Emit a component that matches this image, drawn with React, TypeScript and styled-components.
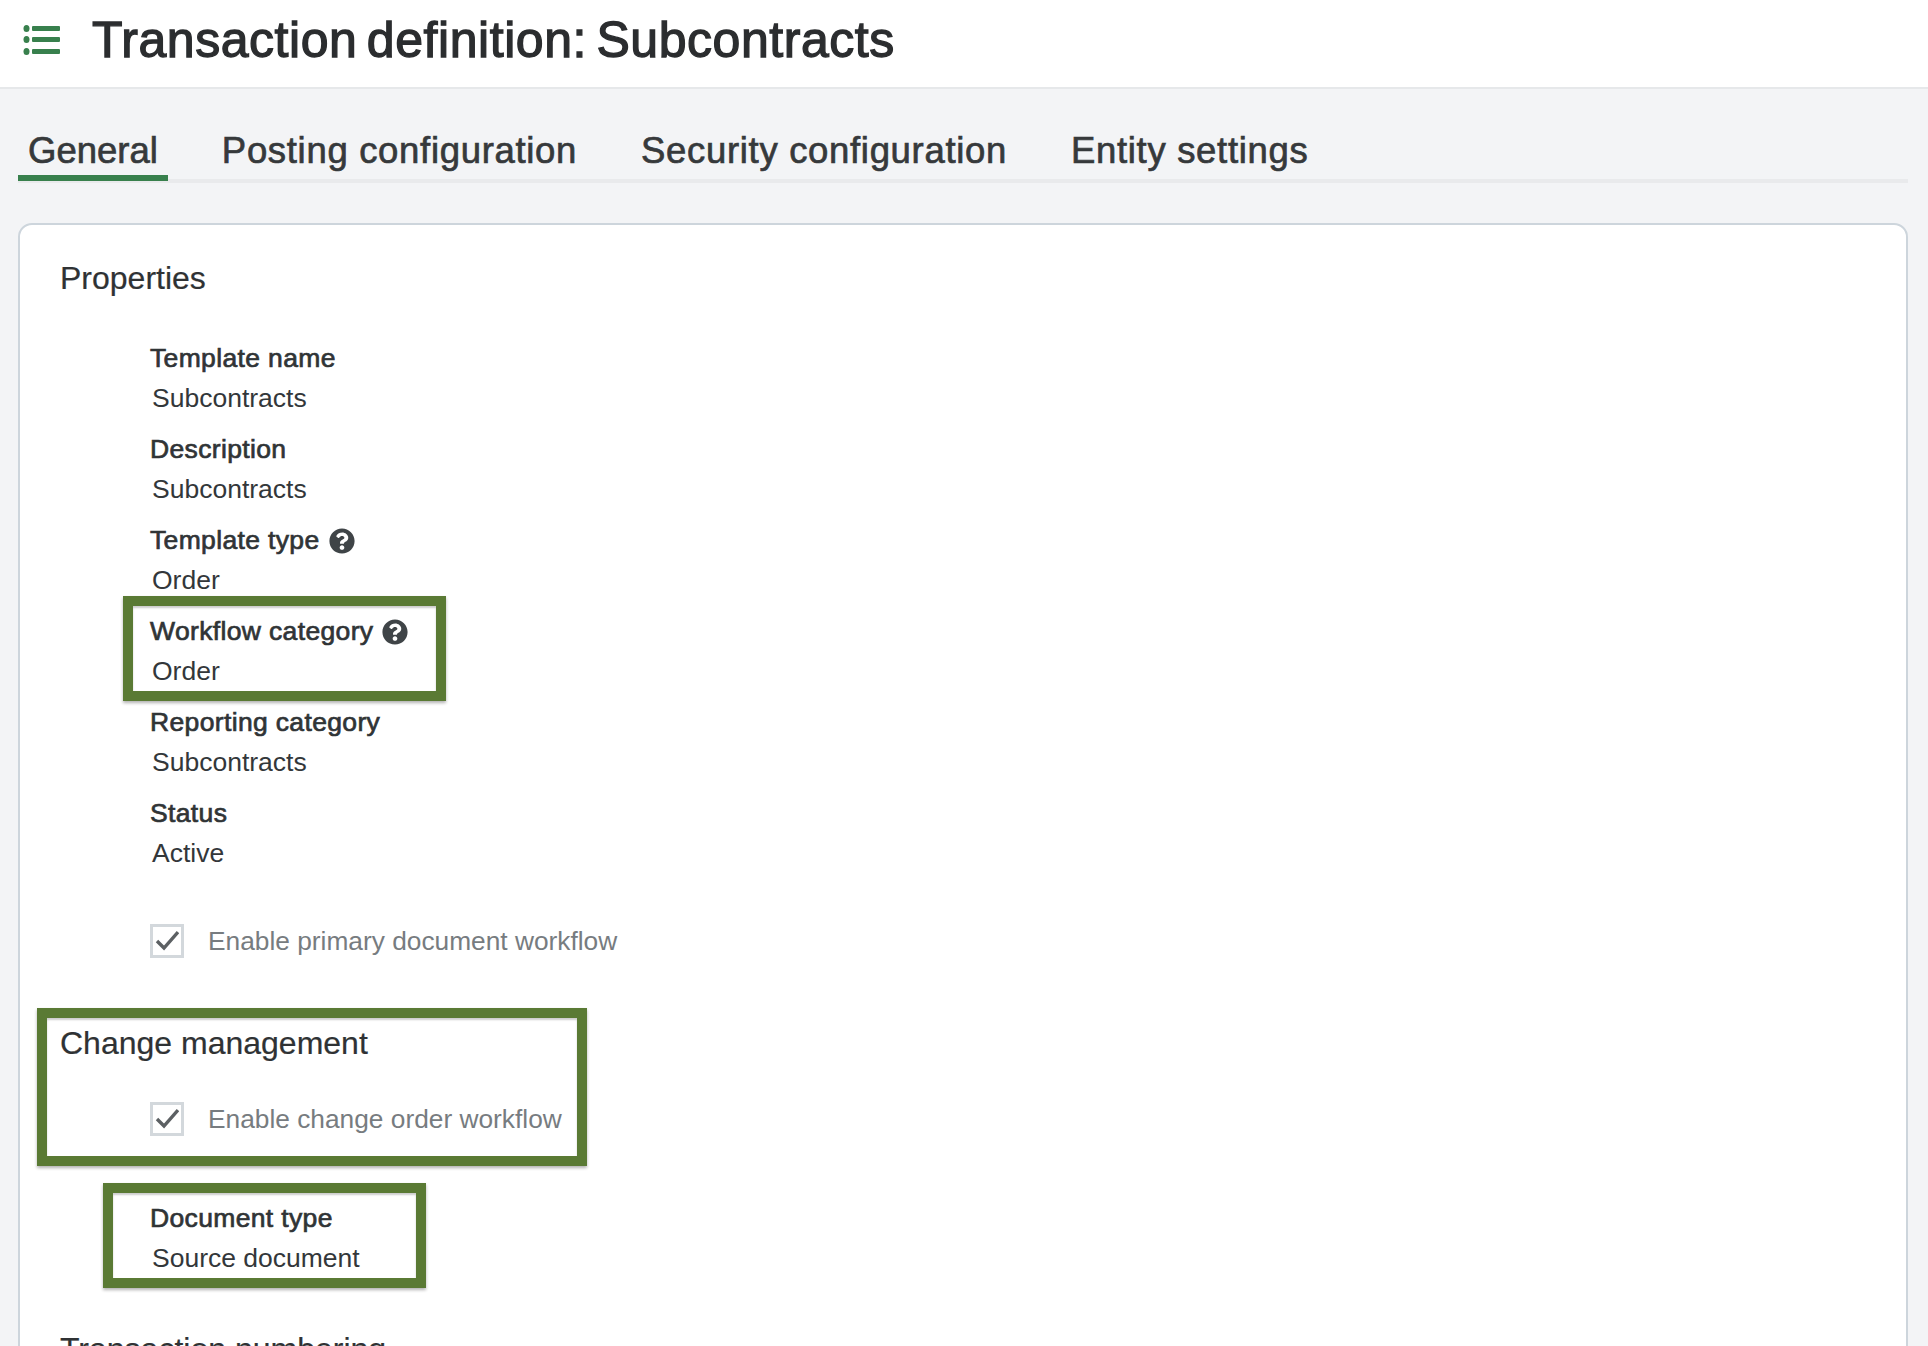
import React from 'react';
import styled, {createGlobalStyle} from 'styled-components';
import {FaQuestionCircle} from 'react-icons/fa';

const GlobalStyle = createGlobalStyle`
  html, body {
    margin: 0;
    padding: 0;
    height: 1346px;
    overflow: hidden;
    background: #f3f4f6;
    font-family: "Liberation Sans", Arial, sans-serif;
  }
  * {
    box-sizing: border-box;
  }
`;

const Page = styled.div`
  height: 1346px;
  overflow: hidden;
  background: #f3f4f6;
`;

const Header = styled.header`
  height: 89px;
  background: #fff;
  border-bottom: 2px solid #e6e8ea;
  display: flex;
  align-items: center;
  padding: 0 0 7px 23px;
  gap: 31px;
`;

const Title = styled.h1`
  margin: 0;
  font-size: 50px;
  line-height: 60px;
  font-weight: 400;
  letter-spacing: 0.55px;
  word-spacing: -5px;
  color: #2b2d2f;
  -webkit-text-stroke: 1.3px #2b2d2f;
`;

const TabBar = styled.nav`
  display: flex;
  gap: 44px;
  height: 94px;
  margin: 0 20px 40px 18px;
  align-items: flex-end;
  border-bottom: 4px solid #e9eaec;
`;

const Tab = styled.div<{$active?: boolean}>`
  height: 56px;
  margin-bottom: -2px;
  padding: 4px 10px 0;
  font-size: 36.5px;
  line-height: 44px;
  letter-spacing: ${p => (p.$active ? 0 : 0.68)}px;
  color: #36393b;
  -webkit-text-stroke: 0.7px #36393b;
  border-bottom: 6px solid ${p => (p.$active ? '#38804d' : 'transparent')};
`;

const Card = styled.section`
  margin: 0 20px 0 18px;
  padding: 33px 40px 0;
  background: #fff;
  border: 2px solid #cdd5dc;
  border-radius: 14px;
  height: 1200px;
`;

const Heading = styled.h2<{$gap?: number}>`
  margin: ${p => p.$gap ?? 0}px 0 0;
  font-size: 32px;
  line-height: 40px;
  font-weight: 400;
  color: #2f3234;
  -webkit-text-stroke: 0.2px #2f3234;
`;

const Fields = styled.div`
  margin: 42px 0 0 90px;
  display: flex;
  flex-direction: column;
  gap: 13px;
`;

const Field = styled.div`
  position: relative;
`;

const Label = styled.div`
  display: flex;
  align-items: center;
  gap: 9px;
  margin-bottom: 2px;
  font-size: 26.5px;
  line-height: 37px;
  letter-spacing: 0.35px;
  color: #303436;
  -webkit-text-stroke: 0.7px #303436;
  svg {
    color: #3f4447;
  }
`;

const Value = styled.div`
  padding-left: 2px;
  font-size: 26.5px;
  line-height: 39px;
  color: #33373a;
`;

const CheckRow = styled.label<{$gap: number}>`
  margin: ${p => p.$gap}px 0 0 90px;
  display: flex;
  align-items: center;
  gap: 24px;
  height: 34px;
  font-size: 26.3px;
  color: #777c80;
`;

const CheckBox = styled.span`
  width: 34px;
  height: 34px;
  flex: none;
  display: flex;
  align-items: center;
  justify-content: center;
  background: #fff;
  border: 3px solid #d3d8dc;
`;

const ChangeSection = styled.div`
  position: relative;
  margin-top: 65px;
`;

const SingleField = styled(Field)`
  margin: 64px 0 0 90px;
`;

// green annotation frames drawn over the screenshot
const Highlight = styled.div<{$top: number; $left: number; $width: number; $height: number}>`
  position: absolute;
  top: ${p => p.$top}px;
  left: ${p => p.$left}px;
  width: ${p => p.$width}px;
  height: ${p => p.$height}px;
  border: 10px solid #5a7a34;
  box-shadow: 0 2px 3px rgba(0, 0, 0, 0.3), inset 0 2px 2px rgba(0, 0, 0, 0.2);
  pointer-events: none;
`;

const ListIcon = () => (
  <svg width="38" height="32" viewBox="0 0 38 32" fill="#38804d">
    <rect x="9" y="2" width="28" height="5" rx="1" />
    <rect x="9" y="13" width="28" height="5" rx="1" />
    <rect x="9" y="25" width="28" height="5" rx="1" />
    <ellipse cx="3.5" cy="4.5" rx="3" ry="3.5" />
    <ellipse cx="3.5" cy="15.5" rx="3" ry="3.5" />
    <ellipse cx="3.5" cy="27.5" rx="3" ry="3.5" />
  </svg>
);

const Tick = () => (
  <svg width="24" height="24" viewBox="0 0 24 24" fill="none" stroke="#5c6063" strokeWidth="3.4">
    <path d="M2 12l7 7L23 3" />
  </svg>
);

const Help = () => <FaQuestionCircle size={26} />;

const App: React.FC = () => (
  <Page>
    <GlobalStyle />
    <Header>
      <ListIcon />
      <Title>Transaction definition: Subcontracts</Title>
    </Header>
    <TabBar>
      <Tab $active>General</Tab>
      <Tab>Posting configuration</Tab>
      <Tab>Security configuration</Tab>
      <Tab>Entity settings</Tab>
    </TabBar>
    <Card>
      <Heading>Properties</Heading>
      <Fields>
        <Field>
          <Label>Template name</Label>
          <Value>Subcontracts</Value>
        </Field>
        <Field>
          <Label>Description</Label>
          <Value>Subcontracts</Value>
        </Field>
        <Field>
          <Label>Template type <Help /></Label>
          <Value>Order</Value>
        </Field>
        <Field>
          <Highlight $top={-17} $left={-27} $width={323} $height={105} />
          <Label>Workflow category <Help /></Label>
          <Value>Order</Value>
        </Field>
        <Field>
          <Label>Reporting category</Label>
          <Value>Subcontracts</Value>
        </Field>
        <Field>
          <Label>Status</Label>
          <Value>Active</Value>
        </Field>
      </Fields>
      <CheckRow $gap={51}>
        <CheckBox><Tick /></CheckBox>
        Enable primary document workflow
      </CheckRow>
      <ChangeSection>
        <Highlight $top={-15} $left={-23} $width={550} $height={158} />
        <Heading>Change management</Heading>
        <CheckRow $gap={39}>
          <CheckBox><Tick /></CheckBox>
          Enable change order workflow
        </CheckRow>
      </ChangeSection>
      <SingleField>
        <Highlight $top={-17} $left={-47} $width={323} $height={105} />
        <Label>Document type</Label>
        <Value>Source document</Value>
      </SingleField>
      <Heading $gap={51}>Transaction numbering</Heading>
    </Card>
  </Page>
);

export default App;
